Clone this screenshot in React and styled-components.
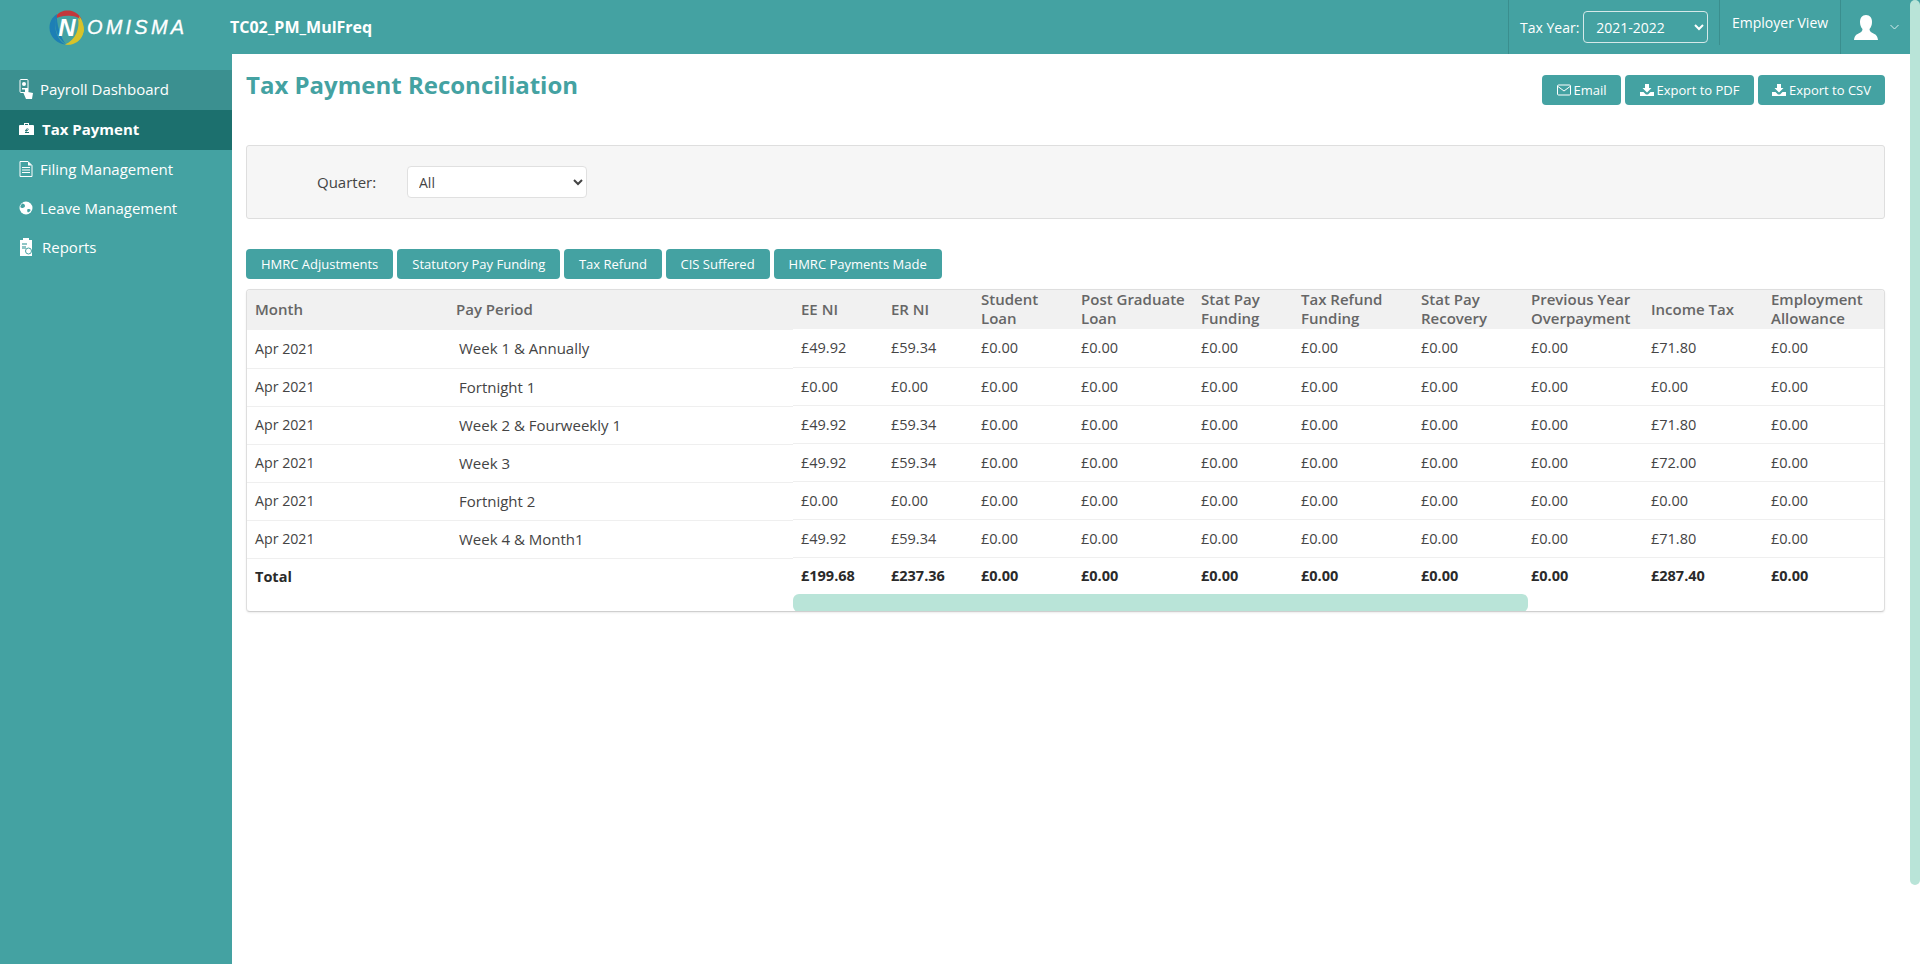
import React from "react";
import styled, { createGlobalStyle } from "styled-components";

// -----------------------------------
// Data
// -----------------------------------

const TEAL = "#44a2a2";

const headings = [
  "EE NI",
  "ER NI",
  "Student Loan",
  "Post Graduate Loan",
  "Stat Pay Funding",
  "Tax Refund Funding",
  "Stat Pay Recovery",
  "Previous Year Overpayment",
  "Income Tax",
  "Employment Allowance",
];
const widths = [90, 90, 100, 120, 100, 120, 110, 120, 120, 121];

const row = (period, ee, er, tax) => ({ period, ee, er, tax });
const rows = [
  row("Week 1 & Annually", "£49.92", "£59.34", "£71.80"),
  row("Fortnight 1", "£0.00", "£0.00", "£0.00"),
  row("Week 2 & Fourweekly 1", "£49.92", "£59.34", "£71.80"),
  row("Week 3", "£49.92", "£59.34", "£72.00"),
  row("Fortnight 2", "£0.00", "£0.00", "£0.00"),
  row("Week 4 & Month1", "£49.92", "£59.34", "£71.80"),
];
const zero = "£0.00";
const amounts = (r) => [r.ee, r.er, zero, zero, zero, zero, zero, zero, r.tax, zero];

// -----------------------------------
// Styled Components
// -----------------------------------

const GlobalStyle = createGlobalStyle`
  html, body {
    margin: 0;
    height: 100%;
    overflow: hidden;
    background: #fff;
    font-family: "Open Sans", "Liberation Sans", sans-serif;
    font-size: 14px;
    color: #333;
  }
  * { box-sizing: border-box; }
`;

const Page = styled.div`
  position: relative;
  width: 1920px;
  height: 964px;
  display: flex;
  flex-direction: column;
  overflow: hidden;
`;

const Header = styled.header`
  height: 54px;
  flex: none;
  display: flex;
  align-items: stretch;
  background: ${TEAL};
  color: #fff;
`;

const Brand = styled.div`
  width: 230px;
  flex: none;
  display: flex;
  align-items: center;
  padding-left: 49px;
`;

const LogoMark = styled.div`
  position: relative;
  width: 37px;
  height: 35px;
  flex: none;
`;

const LogoN = styled.span`
  position: absolute;
  left: 5px;
  top: 0;
  width: 26px;
  text-align: center;
  font: italic 700 24px/35px "Liberation Sans", sans-serif;
  color: #fff;
`;

const LogoText = styled.span`
  font: italic 400 20px/1 "Liberation Sans", sans-serif;
  letter-spacing: 3.2px;
  margin-left: 1px;
  color: #fff;
  -webkit-text-stroke: 0.3px #fff;
`;

const CompanyName = styled.div`
  flex: 1;
  font-size: 16px;
  font-weight: 700;
  line-height: 54px;
`;

const HeaderCell = styled.div`
  display: flex;
  align-items: center;
  border-left: 1px solid #3a8e8e;
  height: ${(p) => (p.$short ? "45px" : "54px")};
  padding: ${(p) => p.$padding};
  width: ${(p) => p.$width};
  font-size: 14px;
`;

const TaxSelect = styled.select`
  width: 125px;
  height: 32px;
  margin-left: 4px;
  padding-left: 8px;
  background: ${TEAL};
  color: #fff;
  border: 1px solid #d5e9e9;
  border-radius: 4px;
  font: 400 14px "Open Sans", sans-serif;
  outline: none;
`;

const ChevronSpacer = styled.span`
  width: 12px;
`;

const Body = styled.div`
  flex: 1;
  display: flex;
  min-height: 0;
`;

const Sidebar = styled.nav`
  width: 232px;
  flex: none;
  padding-top: 16px;
  background: ${TEAL};
`;

const NavItem = styled.div`
  height: ${(p) => (p.$tall ? "40px" : "39px")};
  display: flex;
  align-items: center;
  padding: 0 0 2px 19px;
  gap: ${(p) => p.$gap || "8px"};
  color: #fff;
  font-size: 15px;
  font-weight: ${(p) => (p.$active ? 700 : 400)};
  background: ${(p) => (p.$active ? "#1c706e" : p.$hover ? "#3b9090" : "transparent")};
`;

const Main = styled.main`
  flex: 1;
  min-width: 0;
  padding: 21px 35px 0 14px;
`;

const TitleRow = styled.div`
  display: flex;
  justify-content: space-between;
  align-items: flex-start;
  height: 70px;
`;

const Title = styled.h1`
  margin: -7px 0 0;
  font-size: 24px;
  line-height: 33px;
  font-weight: 700;
  color: ${TEAL};
`;

const ButtonRow = styled.div`
  display: flex;
  gap: 4px;
  margin-bottom: ${(p) => p.$bottom || "0"};
`;

const Button = styled.button`
  height: 30px;
  padding: 0 ${(p) => p.$pad || "15px"};
  display: inline-flex;
  align-items: center;
  gap: 3px;
  border: 0;
  border-radius: 4px;
  background: ${TEAL};
  color: #fff;
  font: 400 13px "Open Sans", sans-serif;
  white-space: nowrap;
`;

const FilterPanel = styled.section`
  height: 74px;
  margin-bottom: 30px;
  display: flex;
  align-items: center;
  padding: 0 0 0 70px;
  background: #f6f6f6;
  border: 1px solid #dedede;
  border-radius: 3px;
`;

const FilterLabel = styled.label`
  width: 90px;
  font-size: 15px;
  color: #444;
`;

const QuarterSelect = styled.select`
  width: 180px;
  height: 32px;
  padding-left: 7px;
  background: #fff;
  color: #444;
  border: 1px solid #e0e0e0;
  border-radius: 4px;
  font: 400 14px "Open Sans", sans-serif;
  outline: none;
`;

const TableCard = styled.section`
  display: flex;
  height: 323px;
  background: #fff;
  border: 1px solid #dedede;
  border-bottom-color: #cfcfcf;
  border-radius: 4px;
  box-shadow: 0 1px 2px rgba(0, 0, 0, 0.08);
  overflow: hidden;
`;

const FrozenPane = styled.div`
  width: 546px;
  flex: none;
`;

const ScrollPane = styled.div`
  width: 1091px;
  flex: none;
`;

const Table = styled.table`
  width: 100%;
  table-layout: fixed;
  border-collapse: collapse;
  border-spacing: 0;
`;

const HeadRow = styled.tr`
  height: ${(p) => p.$height};
  background: #f1f1f1;
`;

const HeadCell = styled.th`
  padding: 0 8px 1px;
  text-align: left;
  vertical-align: middle;
  font-size: 15px;
  line-height: 19px;
  font-weight: 600;
  color: #666;
`;

const BodyRow = styled.tr`
  height: ${(p) => p.$height || "38px"};
  border-bottom: ${(p) => (p.$last ? "0" : "1px solid #efefef")};
`;

const Cell = styled.td`
  padding: 0 8px ${(p) => p.$lift || "0"} ${(p) => p.$left || "8px"};
  font-size: ${(p) => p.$size || "14.5px"};
  font-weight: ${(p) => (p.$bold ? 700 : 400)};
  color: ${(p) => (p.$bold ? "#2a2a2a" : "#444")};
  white-space: nowrap;
`;

const ScrollThumb = styled.div`
  width: 735px;
  height: 18px;
  background: #b9e4d8;
  border-radius: 6px;
`;

const PageScrollbar = styled.div`
  position: absolute;
  top: 0;
  right: 0;
  width: 10px;
  height: 885px;
  background: #b9e4d8;
  border-radius: 6px;
`;

// -----------------------------------
// Icons
// -----------------------------------

const Ring = () => (
  <svg width="37" height="35" viewBox="0 0 37 35">
    <path d="M5 10C8 2 14 .5 19 .5S30 3 33 10C27 5 12 4 5 10Z" fill="#c2383c" />
    <path d="M8 4C2 8 .5 13 .5 18c0 9 8 16 16 16.500C9 31 3 18 8 4Z" fill="#1d7fb5" />
    <path d="M8 4C4 12 6 27 17 34.500 12 28 7 14 8 4Z" fill="#1d7fb5" />
    <path d="M30 6c7 8 7 24-6 28-3 1-6 1-8 .500C28 33 33 18 30 6Z" fill="#d8c32b" />
    <path d="M29 8c2 10-2 22-13 26.500 9 0 17-4 19-14 0-5-2-9-6-12.500Z" fill="#d8c32b" />
  </svg>
);

const HandIcon = () => (
  <svg width="14" height="20" viewBox="0 0 14 20">
    <rect x="1" y="0.500" width="8" height="13" rx="1" fill="none" stroke="#fff" />
    <circle cx="5" cy="5" r="2" fill="#fff" />
    <path d="M3 9h4v1.500H3z" fill="#fff" />
    <path d="M6 9v5l-2-1 3 7h6l1-6-5-1V9z" fill="#fff" />
  </svg>
);

const CaseIcon = () => (
  <svg width="15" height="14" viewBox="0 0 15 14">
    <path d="M1 3h4V1h5v2h4a1 1 0 0 1 1 1v9H0V4a1 1 0 0 1 1-1zM6 3h3V2H6z" fill="#fff" fillRule="evenodd" />
    <path d="M6 11h4v-1H7.500V8.800H9V8H7.500c0-1 1.500-1 1.500-.3h.8C9.800 6 6.700 6 6.700 8H6v.8h.7V10H6z" fill="#1c706e" />
  </svg>
);

const FileIcon = () => (
  <svg width="14" height="16" viewBox="0 0 14 16">
    <path d="M1 .500h8l4 4v11H1z" fill="none" stroke="#fff" />
    <path d="M9 .500v4h4zM3 6h8v1H3zM3 8.500h8v1H3zM3 11h8v1H3z" fill="#fff" />
  </svg>
);

const GlobeIcon = () => (
  <svg width="14" height="14" viewBox="0 0 14 14">
    <circle cx="7" cy="7" r="6.500" fill="#fff" />
    <path d="M3 2.500c2 0 3 1 3 2.500S4 7 3 7 1 6 1.500 5zM9 8c2 0 3 .5 2.500 1.500S9 12 8.500 11 8 8 9 8z" fill={TEAL} />
  </svg>
);

const ClipboardIcon = () => (
  <svg width="14" height="18" viewBox="0 0 14 18">
    <path d="M1 2h3V0h6v2h3v16H1z" fill="#fff" />
    <path d="M3 5h5v2H3zM3 8h4v3H3z" fill="#8fc5c5" />
    <circle cx="9.500" cy="13" r="3" fill="none" stroke={TEAL} />
  </svg>
);

const EnvelopeIcon = () => (
  <svg width="14" height="12" viewBox="0 0 14 12">
    <rect x="0.500" y="1" width="13" height="10" rx="1" fill="none" stroke="#fff" />
    <path d="M1 2.500l6 4.500 6-4.500" fill="none" stroke="#fff" />
  </svg>
);

const SaveIcon = () => (
  <svg width="14" height="12" viewBox="0 0 14 12">
    <path d="M5 0h4v4h2.500L7 8.500 2.500 4H5z" fill="#fff" />
    <path d="M0 8h3.500L6 10.500h2L10.500 8H14v4H0z" fill="#fff" />
  </svg>
);

const UserIcon = () => (
  <svg width="24" height="25" viewBox="0 0 24 25">
    <path d="M12 0c4 0 6 3 6 7 0 3-1 5.500-2.500 7 0 2 1 3 4 4.500 2 1 4 2 4.500 6.500H0c.5-4.500 2.500-5.500 4.500-6.500 3-1.500 4-2.500 4-4.500C7 12.500 6 10 6 7c0-4 2-7 6-7z" fill="#fff" />
  </svg>
);

const Chevron = () => (
  <svg width="9" height="6" viewBox="0 0 9 6">
    <path d="M.5 1l4 4 4-4" fill="none" stroke="#d6ecec" />
  </svg>
);

// -----------------------------------
// React Components
// -----------------------------------

const navItems = [
  { label: "Payroll Dashboard", icon: <HandIcon />, hover: true, tall: true, gap: "7px" },
  { label: "Tax Payment", icon: <CaseIcon />, active: true, tall: true },
  { label: "Filing Management", icon: <FileIcon />, gap: "7px" },
  { label: "Leave Management", icon: <GlobeIcon />, gap: "7px" },
  { label: "Reports", icon: <ClipboardIcon />, gap: "9px" },
];

const tabs = [
  { label: "HMRC Adjustments" },
  { label: "Statutory Pay Funding" },
  { label: "Tax Refund", pad: "14.500px" },
  { label: "CIS Suffered" },
  { label: "HMRC Payments Made" },
];

const totals = ["£199.68", "£237.36", zero, zero, zero, zero, zero, zero, "£287.40", zero];

const App = () => (
  <Page>
    <GlobalStyle />
    <Header>
      <Brand>
        <LogoMark>
          <Ring />
          <LogoN>N</LogoN>
        </LogoMark>
        <LogoText>OMISMA</LogoText>
      </Brand>
      <CompanyName>TC02_PM_MulFreq</CompanyName>
      <HeaderCell $width="211px" $padding="0 0 0 11px">
        Tax Year:
        <TaxSelect defaultValue="2021-2022">
          <option>2021-2022</option>
        </TaxSelect>
      </HeaderCell>
      <HeaderCell $short $width="121px" $padding="0 0 0 12px">
        Employer View
      </HeaderCell>
      <HeaderCell $width="80px" $padding="0 0 0 13px">
        <UserIcon />
        <ChevronSpacer />
        <Chevron />
      </HeaderCell>
    </Header>
    <Body>
      <Sidebar>
        {navItems.map((item) => (
          <NavItem
            key={item.label}
            $active={item.active}
            $hover={item.hover}
            $tall={item.tall}
            $gap={item.gap}
          >
            {item.icon}
            {item.label}
          </NavItem>
        ))}
      </Sidebar>
      <Main>
        <TitleRow>
          <Title>Tax Payment Reconciliation</Title>
          <ButtonRow>
            <Button $pad="14.500px">
              <EnvelopeIcon /> Email
            </Button>
            <Button $pad="14.500px">
              <SaveIcon /> Export to PDF
            </Button>
            <Button $pad="14px">
              <SaveIcon /> Export to CSV
            </Button>
          </ButtonRow>
        </TitleRow>
        <FilterPanel>
          <FilterLabel>Quarter:</FilterLabel>
          <QuarterSelect defaultValue="All">
            <option>All</option>
          </QuarterSelect>
        </FilterPanel>
        <ButtonRow $bottom="10px">
          {tabs.map((tab) => (
            <Button key={tab.label} $pad={tab.pad}>
              {tab.label}
            </Button>
          ))}
        </ButtonRow>
        <TableCard>
          <FrozenPane>
            <Table>
              <colgroup>
                <col width="201" />
                <col width="345" />
              </colgroup>
              <thead>
                <HeadRow $height="40px">
                  <HeadCell>Month</HeadCell>
                  <HeadCell>Pay Period</HeadCell>
                </HeadRow>
              </thead>
              <tbody>
                {rows.map((r) => (
                  <BodyRow key={r.period}>
                    <Cell $size="14.200px" $lift="1px">
                      Apr 2021
                    </Cell>
                    <Cell $left="11px" $size="15px" $lift="1px">
                      {r.period}
                    </Cell>
                  </BodyRow>
                ))}
                <BodyRow $last $height="37px">
                  <Cell $bold>Total</Cell>
                  <Cell />
                </BodyRow>
              </tbody>
            </Table>
          </FrozenPane>
          <ScrollPane>
            <Table>
              <colgroup>
                {widths.map((w, i) => (
                  <col key={i} width={w} />
                ))}
              </colgroup>
              <thead>
                <HeadRow $height="39px">
                  {headings.map((h) => (
                    <HeadCell key={h}>{h}</HeadCell>
                  ))}
                </HeadRow>
              </thead>
              <tbody>
                {rows.map((r) => (
                  <BodyRow key={r.period}>
                    {amounts(r).map((v, i) => (
                      <Cell key={i}>{v}</Cell>
                    ))}
                  </BodyRow>
                ))}
                <BodyRow $last $height="37px">
                  {totals.map((v, i) => (
                    <Cell key={i} $bold>
                      {v}
                    </Cell>
                  ))}
                </BodyRow>
              </tbody>
            </Table>
            <ScrollThumb />
          </ScrollPane>
        </TableCard>
      </Main>
    </Body>
    <PageScrollbar />
  </Page>
);

export default App;
